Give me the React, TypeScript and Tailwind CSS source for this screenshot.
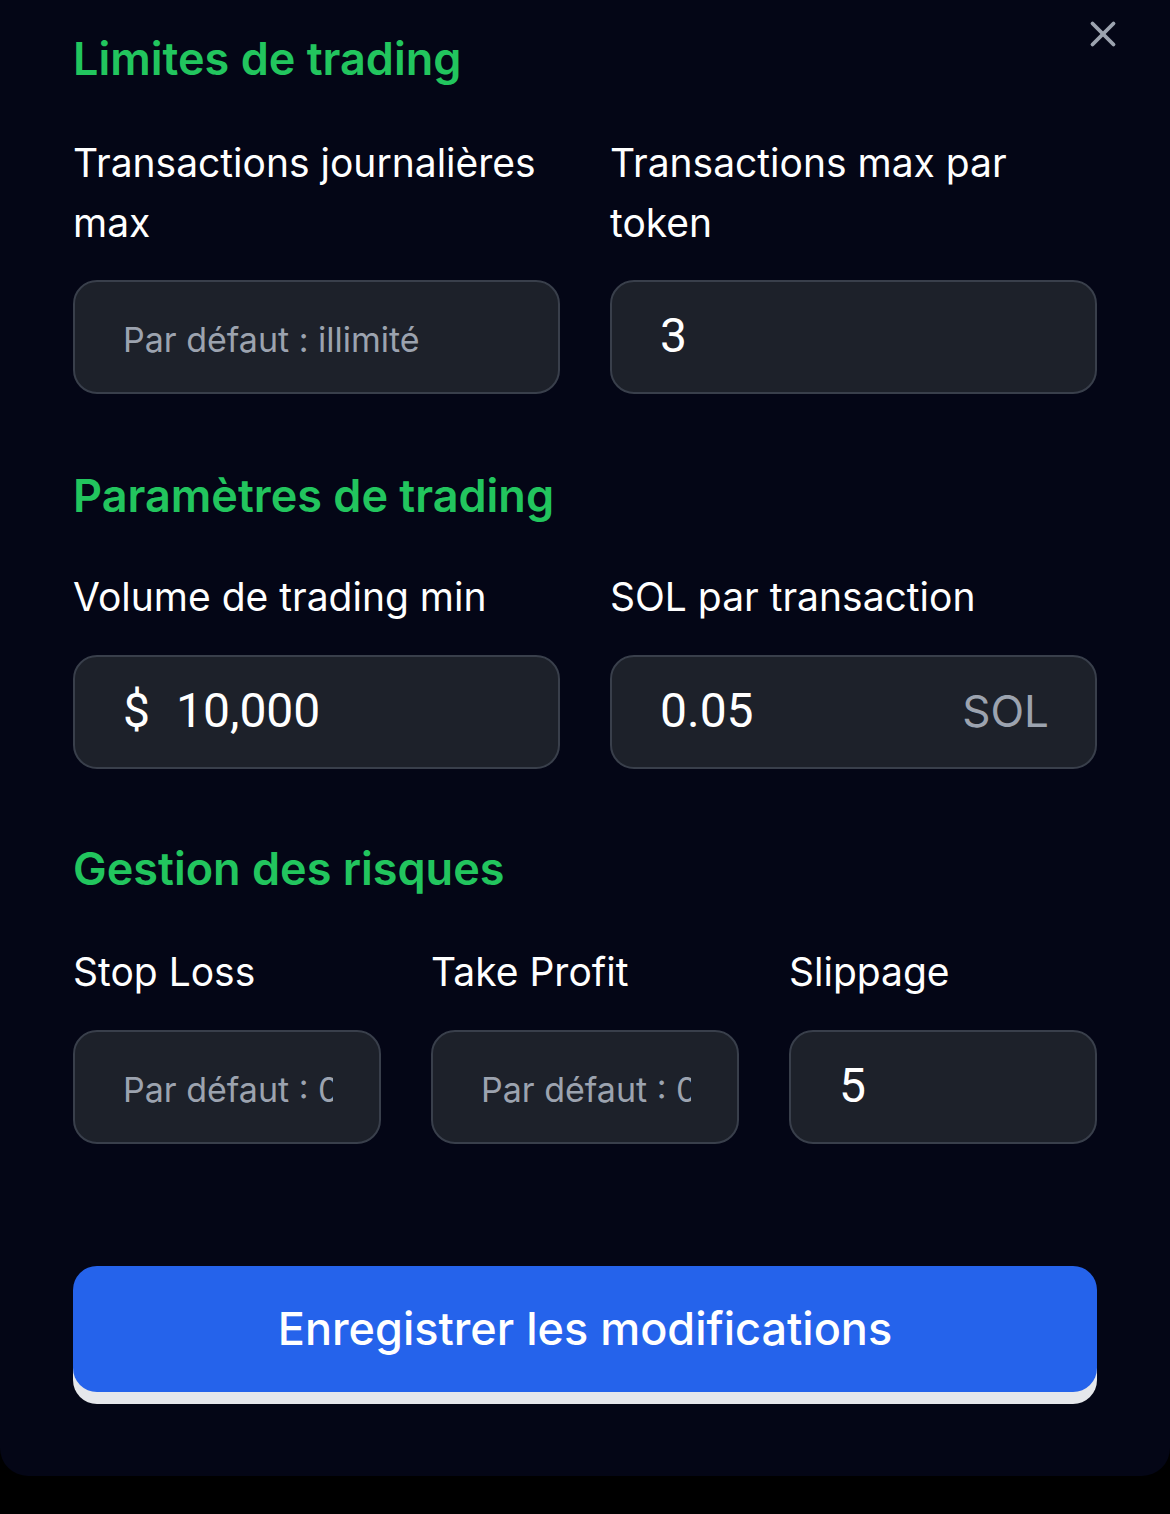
import { X } from "lucide-react";

function Heading({ children }: { children: React.ReactNode }) {
  return (
    <h2 className="text-[45px] leading-[60px] font-semibold text-[#22c55e]">
      {children}
    </h2>
  );
}

function Label({ children }: { children: React.ReactNode }) {
  return <label className="block text-[39px] leading-[60px] text-white">{children}</label>;
}

const inputCls =
  "w-full min-w-0 bg-transparent outline-none font-['Roboto'] text-[48px] text-white placeholder:font-['Inter'] placeholder:text-[34px] placeholder:text-[#9ca3af]";

function Field({
  placeholder,
  value,
  prefix,
  suffix,
}: {
  placeholder?: string;
  value?: string;
  prefix?: string;
  suffix?: string;
}) {
  return (
    <div className="flex h-[114px] items-center rounded-[24px] border-2 border-[#393f4b] bg-[#1d212a] pl-[48px] pr-[46px] pb-[2px]">
      {prefix && <span className="mr-[26px] font-['Roboto'] text-[48px] text-white">{prefix}</span>}
      <input className={inputCls} placeholder={placeholder} defaultValue={value} readOnly />
      {suffix && <span className="ml-4 text-[44px] text-[#9ca3af]">{suffix}</span>}
    </div>
  );
}

export default function App() {
  return (
    <div className="min-h-[1514px] bg-black font-['Inter',sans-serif]">
      <div className="relative rounded-b-[28px] bg-[#040616] px-[73px] pt-[29px] pb-[84px]">
        <button className="absolute top-[13px] right-[46px] text-[#9ca3af]">
          <X className="size-[42px]" strokeWidth={2.2} />
        </button>

        <Heading>Limites de trading</Heading>
        <div className="mt-[44px] grid grid-cols-2 gap-x-[50px]">
          <div>
            <Label>Transactions journalières max</Label>
            <div className="mt-[27px]">
              <Field placeholder="Par défaut : illimité" />
            </div>
          </div>
          <div>
            <Label>Transactions max par token</Label>
            <div className="mt-[27px]">
              <Field value="3" />
            </div>
          </div>
        </div>

        <div className="mt-[72px]">
          <Heading>Paramètres de trading</Heading>
        </div>
        <div className="mt-[41px] grid grid-cols-2 gap-x-[50px]">
          <div>
            <Label>Volume de trading min</Label>
            <div className="mt-[28px]">
              <Field prefix="$" value="10,000" />
            </div>
          </div>
          <div>
            <Label>SOL par transaction</Label>
            <div className="mt-[28px]">
              <Field value="0.05" suffix="SOL" />
            </div>
          </div>
        </div>

        <div className="mt-[70px]">
          <Heading>Gestion des risques</Heading>
        </div>
        <div className="mt-[43px] grid grid-cols-3 gap-x-[50px]">
          <div>
            <Label>Stop Loss</Label>
            <div className="mt-[28px]">
              <Field placeholder="Par défaut : 0" />
            </div>
          </div>
          <div>
            <Label>Take Profit</Label>
            <div className="mt-[28px]">
              <Field placeholder="Par défaut : 0" />
            </div>
          </div>
          <div>
            <Label>Slippage</Label>
            <div className="mt-[28px]">
              <Field value="5" />
            </div>
          </div>
        </div>

        <button className="mt-[122px] flex h-[126px] w-full items-center justify-center rounded-[24px] bg-[#2563eb] text-[45px] font-medium text-white shadow-[0_12px_0_#e5e7eb]">
          Enregistrer les modifications
        </button>
      </div>
    </div>
  );
}
